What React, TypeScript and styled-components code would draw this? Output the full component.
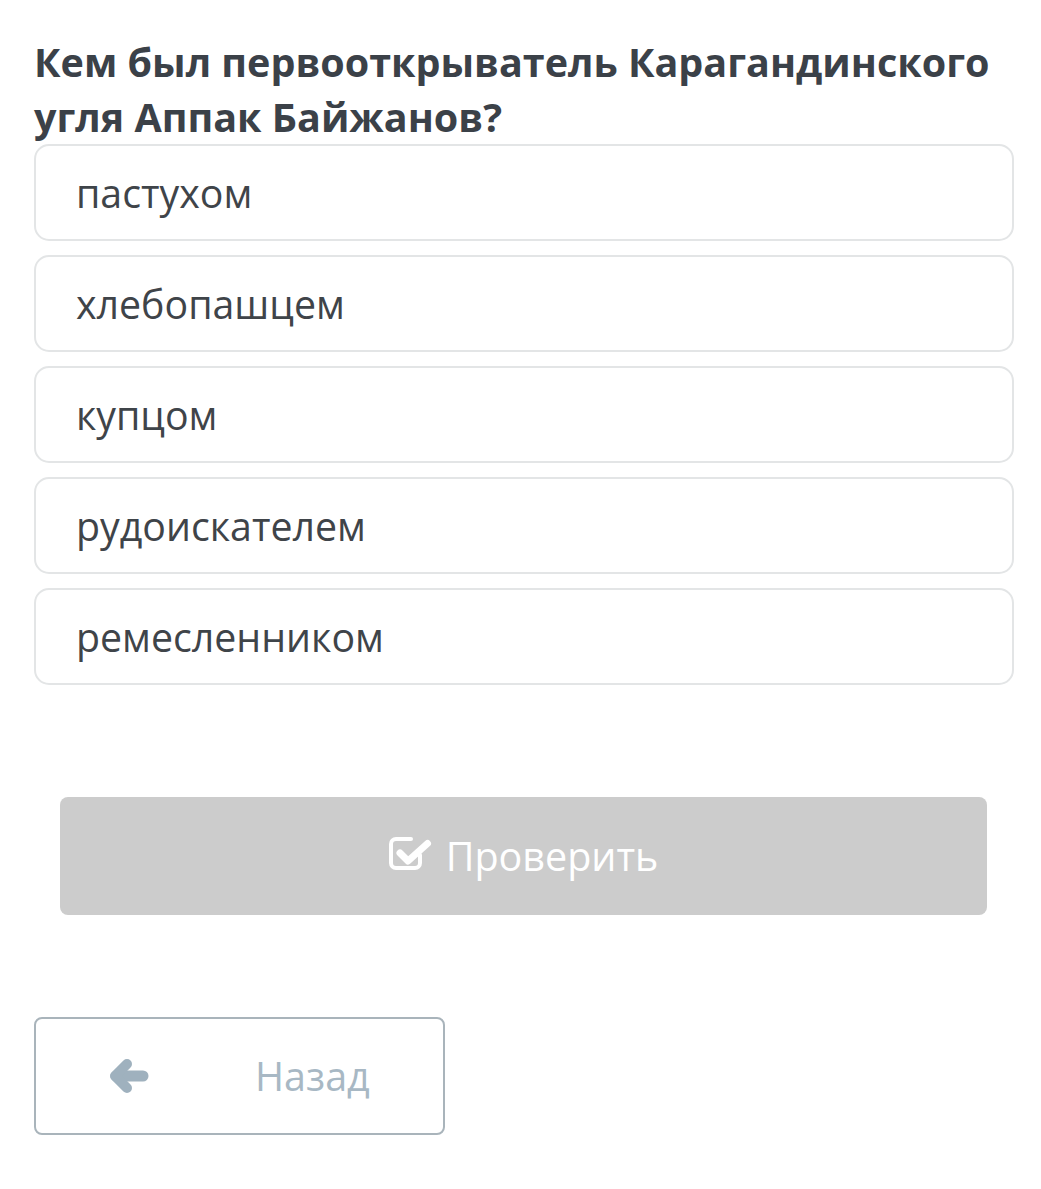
import styled, { createGlobalStyle } from "styled-components"

const answers = ["пастухом", "хлебопашцем", "купцом", "рудоискателем", "ремесленником"]

export default function App(){
    return(
        <>
            <GlobalStyle />
            <Page>
                <Question>Кем был первооткрыватель Карагандинского угля Аппак Байжанов?</Question>
                <AnswerList>
                    {answers.map((a) => (
                        <Answer key={a}>{a}</Answer>
                    ))}
                </AnswerList>
                <CheckBtn type="button" disabled>
                    <CheckIcon />
                    Проверить
                </CheckBtn>
                <BackBtn type="button">
                    <ArrowIcon />
                    <span>Назад</span>
                </BackBtn>
            </Page>
        </>
    )
}

function CheckIcon(){
    return(
        <svg width="44" height="40" viewBox="0 0 44 40" fill="none">
            <path d="M31 23v8a5 5 0 0 1-5 5H7a5 5 0 0 1-5-5V12a5 5 0 0 1 5-5h15"
                stroke="#fff" strokeWidth="4" strokeLinecap="round" />
            <path d="M11 21l8 8L38.5 11.5" stroke="#fff" strokeWidth="7" strokeLinecap="round" strokeLinejoin="round" />
        </svg>
    )
}

function ArrowIcon(){
    return(
        <svg width="40" height="38" viewBox="0 0 40 38" fill="none" stroke="#9fb1be" strokeLinecap="round">
            <path d="M6 19H33" strokeWidth="11" />
            <path d="M5 19L17 7M5 19L17 31" strokeWidth="10" strokeLinejoin="round" />
        </svg>
    )
}

const GlobalStyle = createGlobalStyle`
    body{
        margin: 0;
        background: #fff;
        font-family: "Open Sans", "Noto Sans", sans-serif;
    }
`
const Page = styled.div`
    padding: 35px 27px 40px 34px;
    display: flex;
    flex-direction: column;
`
const Question = styled.h2`
    margin: 0;
    font-size: 39.5px;
    line-height: 55px;
    font-weight: 700;
    color: #3b4148;
`
const AnswerList = styled.div`
    display: flex;
    flex-direction: column;
    gap: 14px;
    margin-top: -1px;
`
const Answer = styled.div`
    box-sizing: border-box;
    height: 97px;
    display: flex;
    align-items: center;
    padding: 0 40px;
    border: 2px solid #e3e5e6;
    border-radius: 15px;
    font-size: 39.3px;
    color: #3f4449;
`
const CheckBtn = styled.button`
    margin: 112px 27px 0 26px;
    height: 118px;
    border: none;
    border-radius: 8px;
    background: #cccccc;
    color: #fff;
    font-family: inherit;
    font-size: 39.5px;
    display: flex;
    align-items: center;
    justify-content: center;
    gap: 13px;
    svg{
        margin-top: -8px;
    }
`
const BackBtn = styled.button`
    margin-top: 102px;
    box-sizing: border-box;
    width: 411px;
    height: 118px;
    border: 2px solid #a9b4bb;
    border-radius: 8px;
    background: #fff;
    color: #a8b8c4;
    font-family: inherit;
    font-size: 39.5px;
    display: flex;
    align-items: center;
    padding: 0 0 0 74px;
    span{
        margin-left: 105px;
    }
`
